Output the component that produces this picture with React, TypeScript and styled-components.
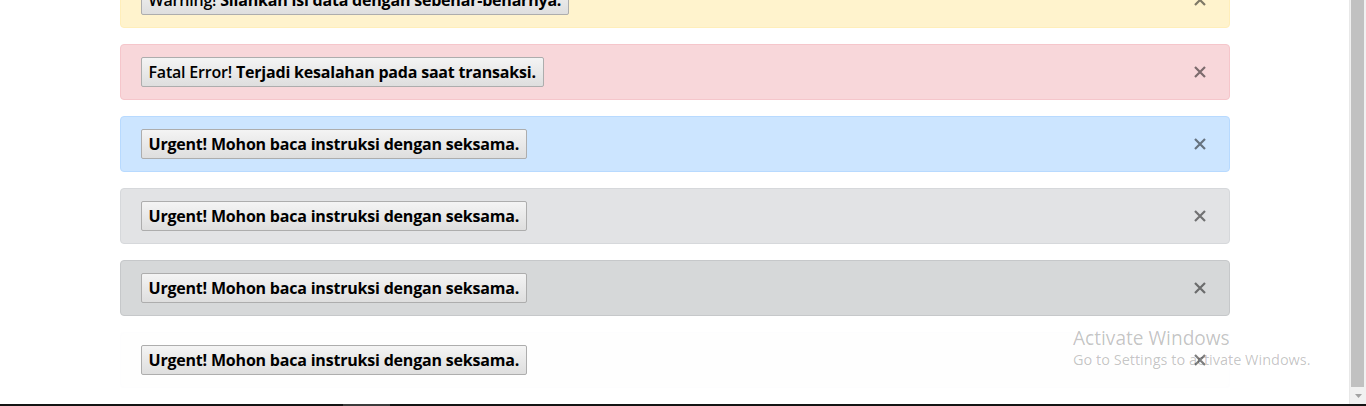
import React from 'react'
import styled, { createGlobalStyle } from 'styled-components'

type Variant = 'warning' | 'danger' | 'primary' | 'secondary' | 'dark' | 'light'

const palette: Record<Variant, { bg: string; border: string }> = {
  warning: { bg: '#fff3cd', border: '#ffeeba' },
  danger: { bg: '#f8d7da', border: '#f5c6cb' },
  primary: { bg: '#cce5ff', border: '#b8daff' },
  secondary: { bg: '#e2e3e5', border: '#d6d8db' },
  dark: { bg: '#d6d8d9', border: '#c6c8ca' },
  light: { bg: '#fefefe', border: '#fdfdfe' },
}

const GlobalStyle = createGlobalStyle`
  html, body {
    margin: 0;
    padding: 0;
    height: 406px;
    overflow: hidden;
    background: #fff;
  }
  body {
    font-family: "Open Sans", "Noto Sans", sans-serif;
  }
`

const Screen = styled.div`
  display: flex;
  flex-direction: column;
  width: 1366px;
  height: 406px;
  position: relative;
`

const Viewport = styled.div`
  display: flex;
  flex: 1;
  min-height: 0;
`

const Page = styled.main`
  flex: 1;
  overflow: hidden;
  background: #fff;
`

const Container = styled.div`
  width: 1110px;
  margin: -28px auto 0;
`

const Alert = styled.div<{ $variant: Variant }>`
  display: flex;
  align-items: center;
  justify-content: space-between;
  box-sizing: border-box;
  height: 56px;
  padding: 12px 17px 12px 20px;
  margin-bottom: 16px;
  border: 1px solid ${p => palette[p.$variant].border};
  border-radius: 4px;
  background: ${p => palette[p.$variant].bg};
`

const MessageButton = styled.button`
  box-sizing: border-box;
  height: 30px;
  padding: 0 7px;
  border: 1px solid #adadad;
  border-radius: 2px;
  background: linear-gradient(#f4f4f4, #dedede);
  color: #000;
  font-family: "Open Sans", "Noto Sans", sans-serif;
  font-size: 16px;
  letter-spacing: -0.2px;
  line-height: 28px;
  white-space: nowrap;
`

const Lead = styled.span<{ $strong: boolean }>`
  font-weight: ${p => (p.$strong ? 700 : 600)};
`

const Strong = styled.b`
  font-weight: 700;
`

const Close = styled.button`
  display: flex;
  align-items: center;
  justify-content: center;
  width: 24px;
  height: 24px;
  padding: 0;
  border: 0;
  background: transparent;
  color: rgba(0, 0, 0, 0.5);
`

const Scrollbar = styled.div`
  display: flex;
  flex-direction: column;
  width: 17px;
  box-sizing: border-box;
  border-left: 1px solid #e8e8e8;
  background: #f1f1f1;
`

const Thumb = styled.div`
  flex: 1;
  margin: 0 2px 0 1px;
  background: #c1c1c1;
`

const ArrowDown = styled.div`
  height: 17px;
  display: flex;
  align-items: center;
  justify-content: center;
`

const Taskbar = styled.div`
  height: 2px;
  background: #141414;
  display: flex;
`

const TaskItem = styled.div`
  margin-left: 343px;
  width: 47px;
  background: #3c3c3c;
`

const Watermark = styled.div`
  position: absolute;
  left: 1073px;
  top: 325px;
  color: rgba(0, 0, 0, 0.24);
  font-family: "Open Sans", "Noto Sans", sans-serif;
  pointer-events: none;
`

const WatermarkTitle = styled.div`
  font-size: 19.1px;
  line-height: 26px;
`

const WatermarkText = styled.div`
  font-size: 14.5px;
  line-height: 18px;
`

const alerts: { variant: Variant; lead: string; leadBold: boolean; text: string }[] = [
  { variant: 'warning', lead: 'Warning!', leadBold: false, text: 'Silahkan isi data dengan sebenar-benarnya.' },
  { variant: 'danger', lead: 'Fatal Error!', leadBold: false, text: 'Terjadi kesalahan pada saat transaksi.' },
  { variant: 'primary', lead: 'Urgent!', leadBold: true, text: 'Mohon baca instruksi dengan seksama.' },
  { variant: 'secondary', lead: 'Urgent!', leadBold: true, text: 'Mohon baca instruksi dengan seksama.' },
  { variant: 'dark', lead: 'Urgent!', leadBold: true, text: 'Mohon baca instruksi dengan seksama.' },
  { variant: 'light', lead: 'Urgent!', leadBold: true, text: 'Mohon baca instruksi dengan seksama.' },
]

const CloseIcon = () => (
  <svg width="12" height="12" viewBox="0 0 12 12">
    <path d="M1 1 L11 11 M11 1 L1 11" stroke="currentColor" strokeWidth="2.2" />
  </svg>
)

const App = () => {
  return (
    <Screen>
      <GlobalStyle />
      <Viewport>
        <Page>
          <Container>
            {alerts.map((a, i) => (
              <Alert key={i} $variant={a.variant} role="alert">
                <MessageButton>
                  <Lead $strong={a.leadBold}>{a.lead}</Lead> <Strong>{a.text}</Strong>
                </MessageButton>
                <Close aria-label="Close">
                  <CloseIcon />
                </Close>
              </Alert>
            ))}
          </Container>
        </Page>
        <Scrollbar>
          <Thumb />
          <ArrowDown>
            <svg width="7" height="4" viewBox="0 0 7 4">
              <path d="M0 0 L7 0 L3.5 4 Z" fill="#a3a3a3" />
            </svg>
          </ArrowDown>
        </Scrollbar>
      </Viewport>
      <Taskbar>
        <TaskItem />
      </Taskbar>
      <Watermark>
        <WatermarkTitle>Activate Windows</WatermarkTitle>
        <WatermarkText>Go to Settings to activate Windows.</WatermarkText>
      </Watermark>
    </Screen>
  )
}

export default App
